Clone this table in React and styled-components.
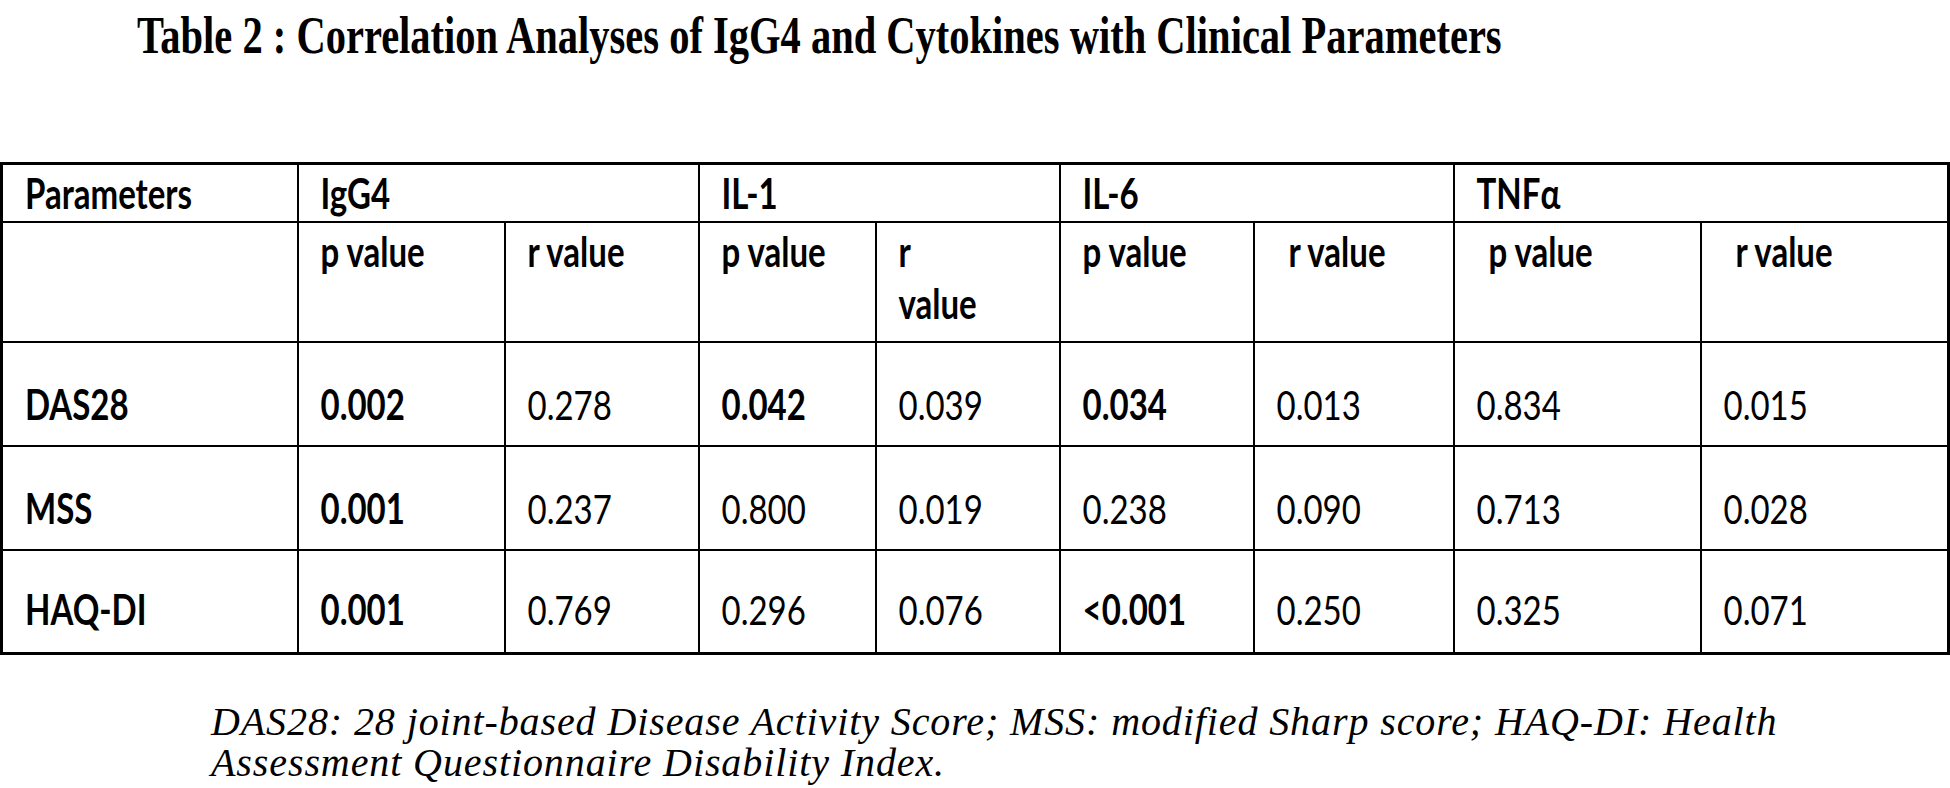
import React from 'react';
import styled, { createGlobalStyle } from 'styled-components';

const GlobalStyle = createGlobalStyle`
  html, body {
    margin: 0;
    padding: 0;
    background: #fff;
  }
  body {
    width: 1950px;
    height: 788px;
    overflow: hidden;
  }
`;

const Page = styled.div`
  width: 1950px;
  height: 788px;
  display: flex;
  flex-direction: column;
  background: #fff;
  color: #000;
`;

// the scan is stretched vertically, so the serif title gets the same tall look
const Title = styled.h1`
  margin: 13px 0 0 137px;
  font-family: "Liberation Serif", "Times New Roman", serif;
  font-weight: bold;
  font-size: 40.5px;
  line-height: 46px;
  transform: scaleY(1.3);
  transform-origin: left center;
`;

const Table = styled.table`
  margin-top: 103px;
  width: 1947px;
  border-collapse: collapse;
  table-layout: fixed;
  border: 3px solid #000;
  font-family: "Lato", "Liberation Sans", sans-serif;
  font-size: 33px;
`;

const Row = styled.tr`
  height: ${(p) => p.$h}px;
`;

const Cell = styled.td`
  border: 2px solid #000;
  padding: ${(p) => p.$top || 2}px 0 0 ${(p) => (p.$indent ? 34 : 22)}px;
  vertical-align: top;
  font-weight: ${(p) => (p.$bold ? 700 : 400)};
  line-height: 52px;
  white-space: nowrap;
`;

const Txt = styled.span`
  display: inline-block;
  transform: scaleY(1.25);
  transform-origin: center;
`;

const Caption = styled.p`
  margin: 46px 0 0 211px;
  font-family: "Liberation Serif", "Times New Roman", serif;
  font-style: italic;
  font-size: 40px;
  line-height: 41px;
  letter-spacing: 0.9px;
`;

const widths = [296, 207, 194, 177, 184, 194, 200, 247, 248];

const heads = ['IgG4', 'IL-1', 'IL-6', 'TNFα'];

const subs = [
  { t: ['p value'] },
  { t: ['r value'] },
  { t: ['p value'] },
  { t: ['r', 'value'] },
  { t: ['p value'] },
  { t: ['r value'], indent: true },
  { t: ['p value'], indent: true },
  { t: ['r value'], indent: true },
];

const rows = [
  { label: 'DAS28', vals: [['0.002', true], ['0.278'], ['0.042', true], ['0.039'], ['0.034', true], ['0.013'], ['0.834'], ['0.015']] },
  { label: 'MSS', vals: [['0.001', true], ['0.237'], ['0.800'], ['0.019'], ['0.238'], ['0.090'], ['0.713'], ['0.028']] },
  { label: 'HAQ-DI', vals: [['0.001', true], ['0.769'], ['0.296'], ['0.076'], ['<0.001', true], ['0.250'], ['0.325'], ['0.071']] },
];

export default function App() {
  return (
    <Page>
      <GlobalStyle />
      <Title>Table 2 : Correlation Analyses of IgG4 and Cytokines with Clinical Parameters</Title>
      <Table>
        <colgroup>
          {widths.map((w, i) => (
            <col key={i} style={{ width: w }} />
          ))}
        </colgroup>
        <tbody>
          <Row $h={58}>
            <Cell $bold><Txt>Parameters</Txt></Cell>
            {heads.map((h) => (
              <Cell key={h} $bold colSpan={2}><Txt>{h}</Txt></Cell>
            ))}
          </Row>
          <Row $h={120}>
            <Cell />
            {subs.map((s, i) => (
              <Cell key={i} $bold $indent={s.indent}>
                {s.t.map((line, j) => (
                  <React.Fragment key={j}>
                    {j > 0 && <br />}
                    <Txt>{line}</Txt>
                  </React.Fragment>
                ))}
              </Cell>
            ))}
          </Row>
          {rows.map((r, k) => (
            <Row key={r.label} $h={104}>
              <Cell $bold $top={k === 2 ? 32 : 35}><Txt>{r.label}</Txt></Cell>
              {r.vals.map(([v, b], i) => (
                <Cell key={i} $bold={b} $top={k === 2 ? 32 : 35}><Txt>{v}</Txt></Cell>
              ))}
            </Row>
          ))}
        </tbody>
      </Table>
      <Caption>
        DAS28: 28 joint-based Disease Activity Score; MSS: modified Sharp score; HAQ-DI: Health
        <br />
        Assessment Questionnaire Disability Index.
      </Caption>
    </Page>
  );
}
